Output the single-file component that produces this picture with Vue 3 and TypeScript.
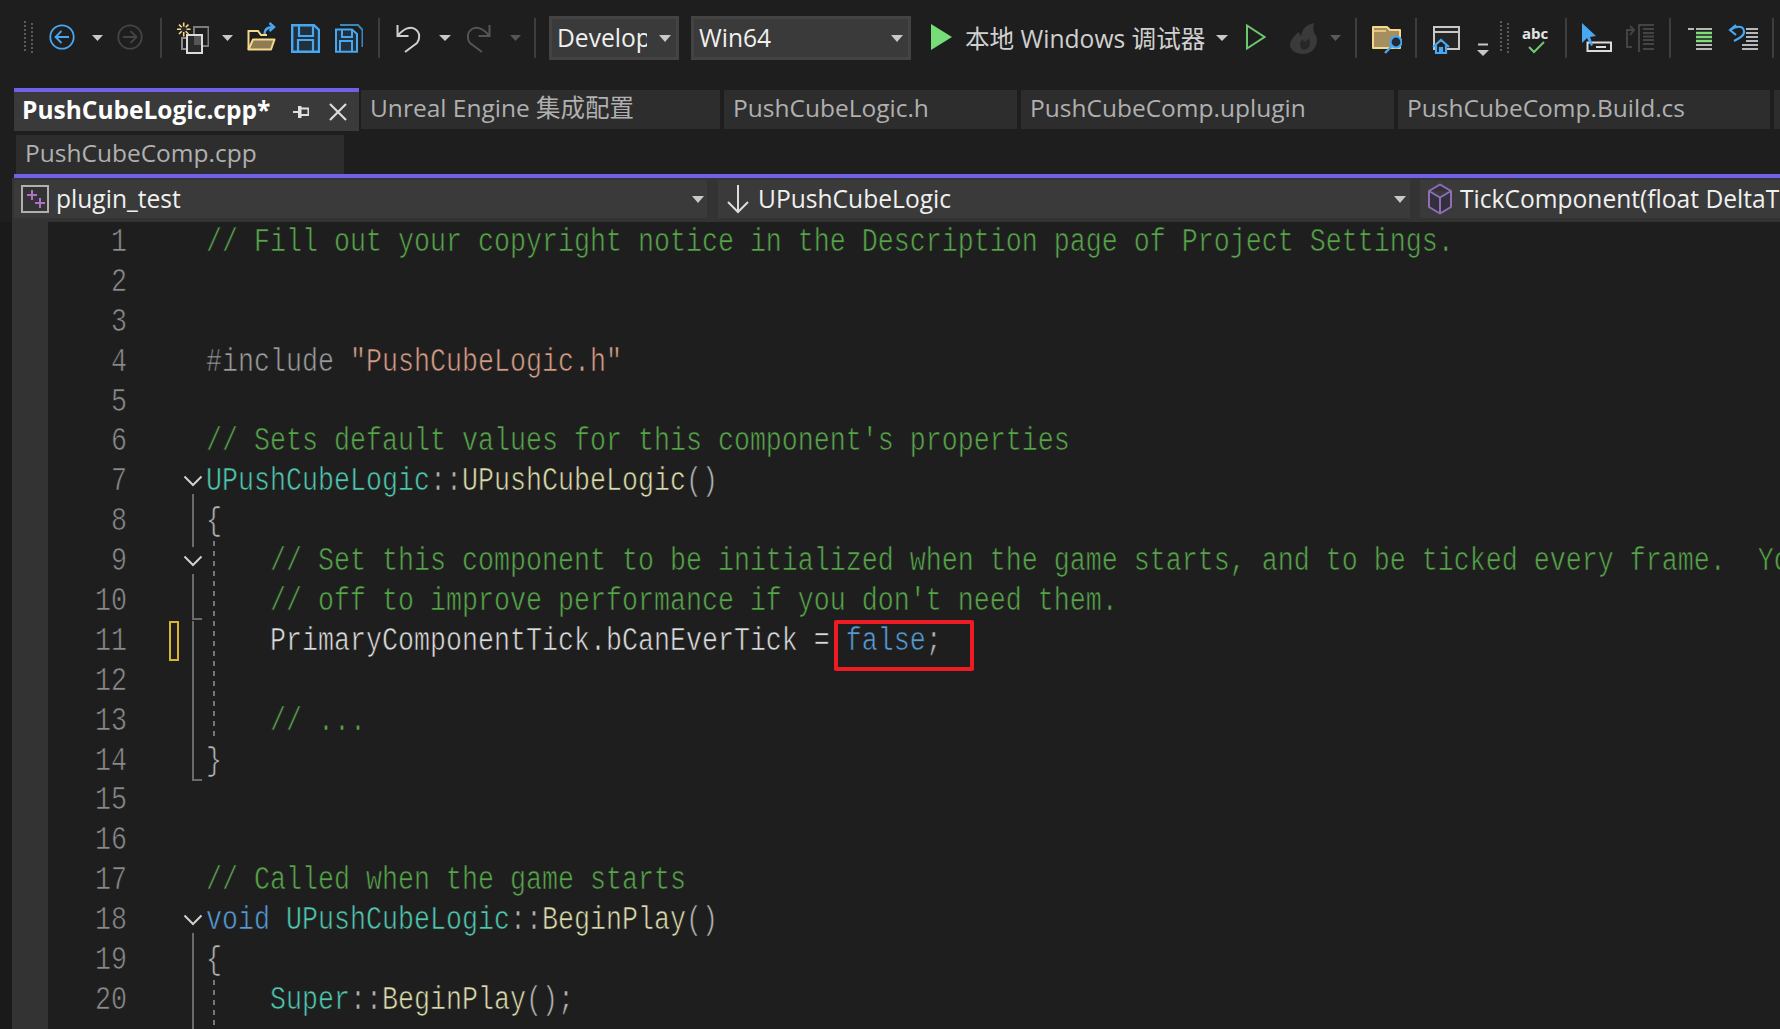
<script setup lang="ts">
type Tok = [string, string]
interface Line {
  n: string
  fold: string
  guide?: boolean
  mark?: boolean
  box?: boolean
  toks: Tok[]
}

const foldPaths: Record<string, string> = {
  v: 'M14 0V40',
  end10: 'M14 0V38H23',
  end14: 'M14 0V39H23',
  stub: 'M14 33V40',
  stub9: 'M14 0V6M14 33V40',
}

const lines: Line[] = [
  { n: '1', fold: '', toks: [['c', '// Fill out your copyright notice in the Description page of Project Settings.']] },
  { n: '2', fold: '', toks: [] },
  { n: '3', fold: '', toks: [] },
  { n: '4', fold: '', toks: [['d', '#include '], ['s', '"PushCubeLogic.h"']] },
  { n: '5', fold: '', toks: [] },
  { n: '6', fold: '', toks: [['c', "// Sets default values for this component's properties"]] },
  { n: '7', fold: 'stub', toks: [['t', 'UPushCubeLogic'], ['p', '::'], ['f', 'UPushCubeLogic'], ['p', '()']] },
  { n: '8', fold: 'v', toks: [['p', '{']] },
  { n: '9', fold: 'stub9', guide: true, toks: [['c', '    // Set this component to be initialized when the game starts, and to be ticked every frame.  You can turn these features']] },
  { n: '10', fold: 'end10', guide: true, toks: [['c', "    // off to improve performance if you don't need them."]] },
  { n: '11', fold: 'v', guide: true, mark: true, box: true, toks: [['n', '    PrimaryComponentTick.bCanEverTick = '], ['k', 'false'], ['p', ';']] },
  { n: '12', fold: 'v', guide: true, toks: [] },
  { n: '13', fold: 'v', guide: true, toks: [['c', '    // ...']] },
  { n: '14', fold: 'end14', toks: [['p', '}']] },
  { n: '15', fold: '', toks: [] },
  { n: '16', fold: '', toks: [] },
  { n: '17', fold: '', toks: [['c', '// Called when the game starts']] },
  { n: '18', fold: 'stub', toks: [['k', 'void'], ['n', ' '], ['t', 'UPushCubeLogic'], ['p', '::'], ['f', 'BeginPlay'], ['p', '()']] },
  { n: '19', fold: 'v', toks: [['p', '{']] },
  { n: '20', fold: 'v', guide: true, toks: [['n', '    '], ['t', 'Super'], ['p', '::'], ['f', 'BeginPlay'], ['p', '();']] },
  { n: '', fold: 'v', guide: true, toks: [] },
]
</script>

<template>
  <div class="ide">
    <header class="toolbar">
      <svg class="ml24" width="10" height="44" viewBox="0 16 10 44"><path class="dots" d="M1 21v32M8 23v30" /></svg>
      <svg class="ml15" width="26" height="44" viewBox="0 16 26 44"><circle cx="13" cy="37" r="11.7" fill="none" stroke="#47a7f0" stroke-width="1.8" /><path d="M20 37H7M12.5 31l-6 6 6 6" fill="none" stroke="#47a7f0" stroke-width="1.8" /></svg>
      <svg class="ml17" width="11" height="44" viewBox="0 16 11 44"><path class="tri" d="M0 35h11l-5.500 6z" /></svg>
      <svg class="ml14" width="26" height="44" viewBox="0 16 26 44"><circle cx="13" cy="37" r="11.700" fill="none" stroke="#444" stroke-width="1.800" /><path d="M6 37h13M13.500 31l6 6-6 6" fill="none" stroke="#444" stroke-width="1.800" /></svg>
      <i class="sep ml17"></i>
      <svg class="ml15" width="32" height="44" viewBox="0 16 32 44">
        <rect x="5" y="38" width="6" height="11" fill="none" stroke="#8a8a8a" stroke-width="2" />
        <rect x="17" y="27" width="14.500" height="19" fill="none" stroke="#7c7c7c" stroke-width="2" />
        <rect x="10" y="35" width="15" height="18" fill="#2a2a2a" stroke="#dcdcdc" stroke-width="2" />
        <rect x="17" y="36" width="7" height="9" fill="#555" />
        <circle cx="6.700" cy="29.300" r="3" fill="#2a2a2a" />
        <path d="M6.700 22.500v4M6.700 32v4.500M0 29.300h4M9.500 29.300h4M2 24.600l2.700 2.700M8.700 31.300l2.700 2.700M11.400 24.600l-2.700 2.700M4.700 31.300 2 34" stroke="#f3d98b" stroke-width="1.600" />
      </svg>
      <svg class="ml13" width="11" height="44" viewBox="0 16 11 44"><path class="tri" d="M0 35h11l-5.500 6z" /></svg>
      <svg class="ml14" width="29" height="44" viewBox="0 16 29 44">
        <path d="M1.500 49.500V31H11l3 4h6" fill="none" stroke="#f6d88c" stroke-width="2" />
        <path d="M1.500 49.500 6 39.500h21.500L24 49.500z" fill="#8e7c55" stroke="#f6d88c" stroke-width="2" stroke-linejoin="round" />
        <path d="M17.500 34c0-5 3-7 9-7M22.500 23l4.500 4-4.500 4" fill="none" stroke="#47a7f0" stroke-width="2.400" />
      </svg>
      <svg class="ml15" width="29" height="44" viewBox="0 16 29 44">
        <path d="M1.200 25.200H23L28 30v21.800H1.200z" fill="#22303b" stroke="#47a7f0" stroke-width="2.400" />
        <path d="M8 25v11h14V25M7 52V40h15v12" fill="none" stroke="#47a7f0" stroke-width="2.200" />
      </svg>
      <svg class="ml15" width="28" height="44" viewBox="0 16 28 44">
        <path d="M5 25h18l4.500 5v17" fill="none" stroke="#3a86bf" stroke-width="2" />
        <path d="M1 29.500h16l5 4.500v17.800H1z" fill="#22303b" stroke="#47a7f0" stroke-width="2" />
        <path d="M7 29v8h10v-8M5 52V41h12v11" fill="none" stroke="#47a7f0" stroke-width="2" />
      </svg>
      <i class="sep ml15"></i>
      <svg class="ml16" width="25" height="44" viewBox="0 16 25 44"><path d="M1.500 25v11h11M1.500 36C8 28 15 26 19 29c5.500 3.500 5 10 2 14L9 52" fill="none" stroke="#cfcfcf" stroke-width="2" /></svg>
      <svg class="ml18" width="12" height="44" viewBox="0 16 12 44"><path class="tri" d="M0 35h12l-6 6z" /></svg>
      <svg class="ml16" width="24" height="44" viewBox="0 16 24 44"><path d="M22.500 25v11h-11M22.500 36C16 28 9 26 5 29c-5.500 3.500-5 10-2 14l12 9" fill="none" stroke="#555" stroke-width="2" /></svg>
      <svg class="ml19" width="11" height="44" viewBox="0 16 11 44"><path d="M0 35h11l-5.500 6z" fill="#555" /></svg>
      <i class="sep ml13"></i>

      <div class="combo ml13 w130">
        <span class="combo-text clip">Develop</span>
        <svg class="combo-arrow" width="12" height="7" viewBox="0 0 12 7"><path class="tri" d="M0 0h12L6 7z" /></svg>
      </div>
      <div class="combo ml12 w220">
        <span class="combo-text grow">Win64</span>
        <svg class="combo-arrow" width="12" height="7" viewBox="0 0 12 7"><path class="tri" d="M0 0h12L6 7z" /></svg>
      </div>

      <svg class="ml20" width="21" height="44" viewBox="0 16 21 44"><path d="M0 24l21 13L0 50z" fill="#76dd78" /></svg>
      <span class="run ml13">本地 Windows 调试器</span>
      <svg class="ml12" width="12" height="44" viewBox="0 16 12 44"><path class="tri" d="M0 35h12l-6 6z" /></svg>
      <svg class="ml18" width="20" height="44" viewBox="0 16 20 44"><path d="M1 25.500 18.500 37 1 48.500z" fill="none" stroke="#6cc870" stroke-width="2" /></svg>
      <svg class="ml24" width="28" height="44" viewBox="0 16 28 44">
        <path d="M24 23c-9 2-12 7-13 13-1-2-2-3-2.500-4C3 37 0 41 0 45c0 5 6 9 13 9 8 0 14-6 14-14 0-4-2-6-3-7-1-3-1-7 0-10z" fill="#3a3a3a" />
        <path d="M13 50c-4-3-4-8 0-11 0 4 4 3 6-1 2 5 1 12-6 12z" fill="#272727" />
      </svg>
      <svg class="ml12" width="11" height="44" viewBox="0 16 11 44"><path d="M0 35h11l-5.500 6z" fill="#5a5a5a" /></svg>
      <i class="sep ml14"></i>

      <svg class="ml15" width="30" height="44" viewBox="0 16 30 44">
        <path d="M1 27h14l3 3h10v18H1z" fill="#a58f60" stroke="#f6d88c" stroke-width="2" stroke-linejoin="round" />
        <path d="M1 31h13" stroke="#f6d88c" stroke-width="1.500" />
        <circle cx="24" cy="42" r="5.500" fill="#1f2a35" stroke="#47a7f0" stroke-width="2.200" />
        <path d="M20 46l-7 7" stroke="#47a7f0" stroke-width="2.400" />
      </svg>
      <i class="sep ml13"></i>
      <svg class="ml15" width="28" height="44" viewBox="0 16 28 44">
        <path d="M2 27h25v22H2z" fill="#252525" stroke="#c8c8c8" stroke-width="2" />
        <path d="M2 32h25" stroke="#c8c8c8" stroke-width="2" />
        <path d="M1 47l8-7 8 7M4 45.500V53h10v-7.500M8 53v-5h2v5" fill="#1e1e1e" stroke="#47a7f0" stroke-width="2.200" />
      </svg>
      <svg class="ml17" width="12" height="44" viewBox="0 16 12 44"><path d="M1 44.500h10" stroke="#c8c8c8" stroke-width="2" /><path class="tri" d="M0 50h12l-6 6z" /></svg>
      <svg class="ml11" width="9" height="44" viewBox="0 16 9 44"><path class="dots" d="M1 21v32M8 23v30" /></svg>
      <svg class="ml13" width="26" height="44" viewBox="0 16 26 44">
        <text x="0" y="39" class="abc">abc</text>
        <path d="M7 47l5 5 10-10" fill="none" stroke="#6fc873" stroke-width="2" />
      </svg>
      <i class="sep ml17"></i>
      <svg class="ml15" width="30" height="44" viewBox="0 16 30 44">
        <rect x="5.500" y="42.500" width="23.500" height="8.500" fill="#1e1e1e" stroke="#dcdcdc" stroke-width="2" />
        <path d="M14 47h10" stroke="#dcdcdc" stroke-width="2" />
        <path d="M0 23v20l5-5 4 8 2-1-3-8 6-1z" fill="#47a7f0" />
      </svg>
      <svg class="ml14" width="29" height="44" viewBox="0 16 29 44">
        <path d="M7 30H1v17h5M4 26l4 4-4 5M13 25h15M13 24v28M17 29h11M17 33h11M17 36.500h11M17 40h11M17 44h11M17 49h11" fill="none" stroke="#444" stroke-width="2" />
      </svg>
      <i class="sep ml14"></i>
      <svg class="ml17" width="24" height="44" viewBox="0 16 24 44">
        <path d="M0 29h6M8 29h16M8 45h16M8 49h16" stroke="#b8b8b8" stroke-width="2" />
        <path d="M8 33h16M8 37h16M8 41h16" stroke="#82dc7c" stroke-width="2.400" />
      </svg>
      <svg class="ml16" width="30" height="44" viewBox="0 16 30 44">
        <path d="M8 25l-6 5 6 5M2 30c6-4 13-5 14 1 1 5-6 8-10 10" fill="none" stroke="#47a7f0" stroke-width="2.200" />
        <path d="M18 29h12M18 33h12M18 37h12M18 41h12M14 45h16M14 49h16" stroke="#b8b8b8" stroke-width="2" />
      </svg>
      <i class="sep ml14"></i>
    </header>

    <nav class="tabs">
      <div class="tab-row">
        <div class="tab active w345">
          <span class="grow">PushCubeLogic.cpp*</span>
          <svg class="raise" width="16" height="14" viewBox="0 0 16 14"><path d="M0 7h6M6 2h1.500v10H6zM7.500 3.500h8v6.500h-8" fill="none" stroke="#e0e0e0" stroke-width="2" /></svg>
          <svg class="ml19 raise" width="20" height="18" viewBox="0 0 20 18"><path d="M2 1l16 16M18 1 2 17" stroke="#dcdcdc" stroke-width="2.200" /></svg>
        </div>
        <div class="tab w359 ml2">Unreal Engine 集成配置</div>
        <div class="tab w293 ml4">PushCubeLogic.h</div>
        <div class="tab w373 ml4">PushCubeComp.uplugin</div>
        <div class="tab w372 ml4">PushCubeComp.Build.cs</div>
        <div class="tab w40 ml4"></div>
      </div>
      <div class="tab-row second">
        <div class="tab w328">PushCubeComp.cpp</div>
      </div>
      <div class="accent"></div>
    </nav>

    <div class="nav-bar">
      <div class="nav-sec w693">
        <svg class="ml7" width="28" height="28" viewBox="0 0 28 28">
          <rect x="1" y="1" width="26" height="26" fill="#333" stroke="#b0b0b0" stroke-width="2" />
          <path d="M6 10h10M11 5v10M14 18h10M19 13v10" stroke="#b070c8" stroke-width="2" />
        </svg>
        <span class="nav-text ml7 grow">plugin_test</span>
        <svg class="mr3" width="12" height="7" viewBox="0 0 12 7"><path class="tri" d="M0 0h12L6 7z" /></svg>
      </div>
      <div class="nav-sec w692 ml11">
        <svg class="ml9" width="22" height="30" viewBox="0 0 22 30"><path d="M11 1v27M1 18l10 10 10-10" fill="none" stroke="#dcdcdc" stroke-width="2" /></svg>
        <span class="nav-text ml9 grow">UPushCubeLogic</span>
        <svg class="mr4" width="12" height="7" viewBox="0 0 12 7"><path class="tri" d="M0 0h12L6 7z" /></svg>
      </div>
      <div class="nav-sec grow ml10 clipbox">
        <svg class="ml8" width="24" height="32" viewBox="0 0 24 32"><path d="M12 1.500 23 8v16l-11 6.500L1 24V8zM1 8l11 6.500L23 8M12 14.500v16" fill="#33303b" stroke="#8d6fb8" stroke-width="2" stroke-linejoin="round" /></svg>
        <span class="nav-text ml8 nowrap">TickComponent(float DeltaTime, ELevelTick TickType, FActorComponentTickFunction* ThisTickFunction)</span>
      </div>
    </div>

    <main class="editor">
      <div v-for="(l, i) in lines" :key="i" class="row">
        <div class="edge"></div>
        <div class="bar"></div>
        <div class="num"><span class="stretch">{{ l.n }}</span></div>
        <div class="mark-col"><i v-if="l.mark" class="mark"></i></div>
        <svg class="fold" width="27" height="40" viewBox="0 0 27 40">
          <path v-if="l.fold" :d="foldPaths[l.fold]" fill="none" stroke="#6a6a6a" stroke-width="2" />
          <path v-if="l.fold.startsWith('stub')" d="M5.500 15.500 14 24l8.500-8.500" fill="none" stroke="#d0d0d0" stroke-width="2" />
        </svg>
        <div class="code" :class="{ guide: l.guide }">
          <span class="stretch"><span v-for="(t, j) in l.toks" :key="j" :class="t[0]">{{ t[1] }}</span></span>
          <i v-if="l.box" class="redbox"></i>
        </div>
      </div>
    </main>
  </div>
</template>

<style>
html, body { margin: 0; background: #1e1e1e; overflow: hidden; }
</style>

<style scoped>
.ide {
  width: 1780px;
  height: 1029px;
  overflow: hidden;
  background: #1e1e1e;
  font-family: "Open Sans", "Noto Sans CJK SC", sans-serif;
  font-size: 24.6px;
  color: #b0b0b0;
  display: flex;
  flex-direction: column;
}
.toolbar { height: 76px; flex: none; display: flex; align-items: center; }
.toolbar > svg { flex: none; display: block; }
.dots { stroke: #5a5a5a; stroke-width: 2; stroke-dasharray: 2 2; fill: none; }
.tri { fill: #c8c8c8; }
.sep { display: block; width: 2px; height: 40px; background: #3e3e3e; flex: none; }
.abc { font: 700 15px "Open Sans", sans-serif; fill: #e4e4e4; }

.ml2 { margin-left: 2px; } .ml4 { margin-left: 4px; } .ml6 { margin-left: 6px; } .ml7 { margin-left: 7px; }
.ml8 { margin-left: 8px; } .ml9 { margin-left: 9px; } .ml10 { margin-left: 10px; } .ml11 { margin-left: 11px; }
.ml12 { margin-left: 12px; } .ml13 { margin-left: 13px; } .ml14 { margin-left: 14px; } .ml15 { margin-left: 15px; }
.ml16 { margin-left: 16px; } .ml17 { margin-left: 17px; } .ml18 { margin-left: 18px; } .ml19 { margin-left: 19px; }
.ml20 { margin-left: 20px; } .ml24 { margin-left: 24px; }
.mr3 { margin-right: 3px; } .mr4 { margin-right: 4px; }
.grow { flex: 1; min-width: 0; }
.nowrap { white-space: nowrap; }

.combo {
  height: 44px;
  box-sizing: border-box;
  background: #3a3a3a;
  border: 3px solid #434343;
  display: flex;
  align-items: center;
  padding-left: 5px;
  flex: none;
  color: #f0f0f0;
}
.w130 { width: 130px; } .w220 { width: 220px; }
.combo-text { line-height: 38px; }
.clip { width: 90px; overflow: hidden; white-space: nowrap; }
.combo-arrow { margin-left: 12px; margin-right: 5px; flex: none; }
.run { width: 239px; white-space: nowrap; color: #d0d0d0; flex: none; margin-bottom: 2px; }

.tabs { flex: none; padding-top: 12px; }
.tab-row { display: flex; align-items: flex-start; padding-left: 14px; height: 43px; overflow: hidden; }
.tab-row.second { padding-left: 16px; height: 39px; margin-top: 4px; }
.tab {
  height: 39px;
  line-height: 36px;
  background: #2d2d2d;
  box-sizing: border-box;
  padding-left: 9px;
  flex: none;
  white-space: nowrap;
  margin-top: 2px;
  font-size: 24.5px;
}
.second .tab { margin-top: 0; }
.tab.active {
  margin-top: 0;
  height: 43px;
  border-top: 4px solid #7160e8;
  background: #3a3a3a;
  color: #fff;
  font-weight: 700;
  display: flex;
  align-items: center;
  padding: 0 11px 4px 8px;
}
.raise { margin-top: 4px; flex: none; }
.w345 { width: 345px; } .w359 { width: 359px; } .w293 { width: 293px; } .w373 { width: 373px; }
.w372 { width: 372px; } .w40 { width: 40px; } .w328 { width: 328px; } .w693 { width: 693px; } .w692 { width: 692px; }
.accent { height: 4px; background: #7160e8; margin-left: 14px; }

.nav-bar {
  flex: none;
  height: 44px;
  box-sizing: border-box;
  margin-left: 12px;
  padding: 2px 0 4px 2px;
  background: #333;
  display: flex;
}
.nav-sec { height: 38px; background: #3a3a3a; display: flex; align-items: center; flex: none; color: #f0f0f0; }
.nav-sec.grow { flex: 1; }
.clipbox { overflow: hidden; }
.nav-sec svg { flex: none; }
.nav-text { line-height: 38px; }

.editor { flex: 1; min-height: 0; overflow: hidden; }
.row { display: flex; height: 39.9px; }
.edge { width: 12px; flex: none; background: #1a1a1a; }
.bar { width: 36px; flex: none; background: #333; }
.num, .code { font-family: "Liberation Mono", monospace; font-size: 26.667px; line-height: 39.9px; white-space: pre; }
.num { width: 79px; flex: none; text-align: right; color: #8c8c8c; }
.mark-col { width: 42px; flex: none; }
.mark { display: block; box-sizing: border-box; width: 10px; height: 40px; border: 2px solid #d8b531; position: relative; left: 42px; }
.fold { flex: none; margin-left: 10px; display: block; }
.code { flex: 1; min-width: 0; position: relative; color: #dcdcdc; }
.stretch {
  display: inline-block;
  transform: translateY(2px) scaleY(1.22);
  transform-origin: 50% 55%;
  -webkit-text-stroke: 0.55px #1e1e1e;
}
.guide {
  background-image: repeating-linear-gradient(#777 0 5px, transparent 5px 10px);
  background-size: 2px 100%;
  background-position: 7px 0;
  background-repeat: no-repeat;
}
.redbox {
  position: absolute;
  left: 628px;
  top: -1px;
  width: 140px;
  height: 51px;
  box-sizing: border-box;
  border: 4px solid #ed1c24;
  border-radius: 2px;
}
.c { color: #57a64a; }
.t { color: #4ec9b0; }
.f { color: #dcdcaa; }
.k { color: #569cd6; }
.s { color: #d69d85; }
.p { color: #b4b4b4; }
.d { color: #9b9b9b; }
.n { color: #dcdcdc; }
</style>
